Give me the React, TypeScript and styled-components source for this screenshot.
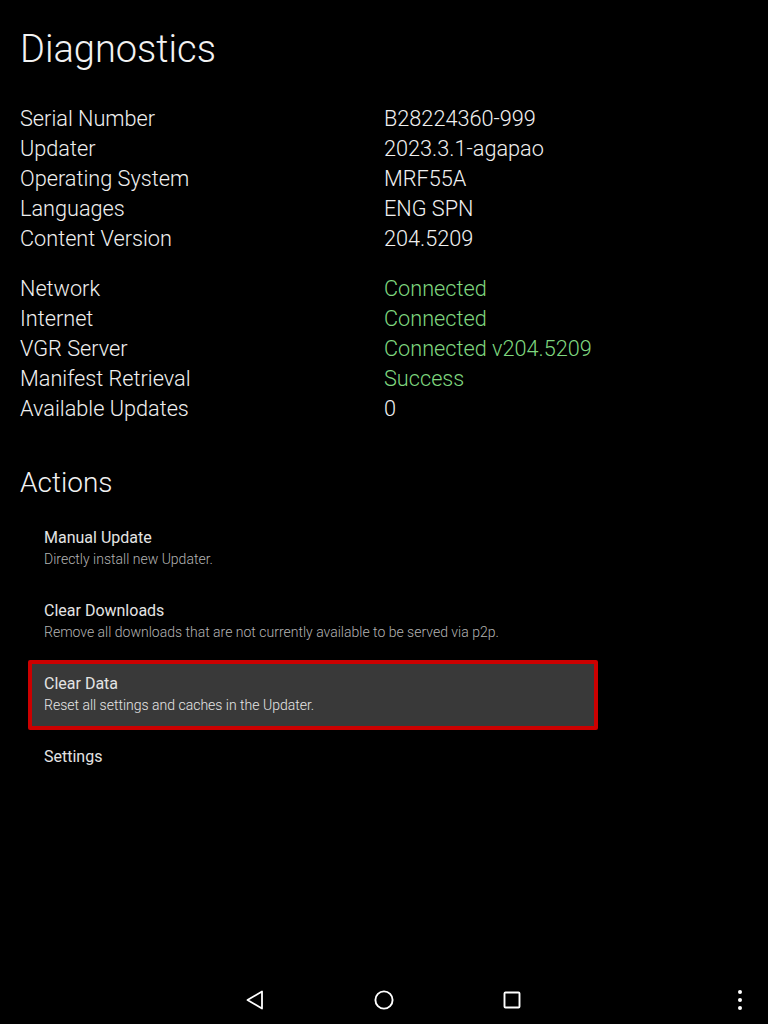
import React from "react";
import styled, { createGlobalStyle } from "styled-components";

const GlobalStyle = createGlobalStyle`
	html, body {
		margin: 0;
		padding: 0;
		background: #000;
	}
	body {
		font-family: Roboto, "Liberation Sans", sans-serif;
		color: #fff;
	}
`;

type Info = { label: string; value: string; ok?: boolean };

const deviceInfo: Info[] = [
	{ label: "Serial Number", value: "B28224360-999" },
	{ label: "Updater", value: "2023.3.1-agapao" },
	{ label: "Operating System", value: "MRF55A" },
	{ label: "Languages", value: "ENG SPN" },
	{ label: "Content Version", value: "204.5209" },
];

const statusInfo: Info[] = [
	{ label: "Network", value: "Connected", ok: true },
	{ label: "Internet", value: "Connected", ok: true },
	{ label: "VGR Server", value: "Connected v204.5209", ok: true },
	{ label: "Manifest Retrieval", value: "Success", ok: true },
	{ label: "Available Updates", value: "0" },
];

const actions = [
	{ title: "Manual Update", sub: "Directly install new Updater." },
	{
		title: "Clear Downloads",
		sub: "Remove all downloads that are not currently available to be served via p2p.",
	},
	{ title: "Clear Data", sub: "Reset all settings and caches in the Updater.", selected: true },
	{ title: "Settings" },
];

export default function App() {
	return (
		<Page>
			<GlobalStyle />
			<Content>
				<Title>Diagnostics</Title>
				<InfoGrid>
					{deviceInfo.map((row) => (
						<React.Fragment key={row.label}>
							<Label>{row.label}</Label>
							<Value $ok={row.ok}>{row.value}</Value>
						</React.Fragment>
					))}
				</InfoGrid>
				<InfoGrid $spaced>
					{statusInfo.map((row) => (
						<React.Fragment key={row.label}>
							<Label>{row.label}</Label>
							<Value $ok={row.ok}>{row.value}</Value>
						</React.Fragment>
					))}
				</InfoGrid>
				<SectionTitle>Actions</SectionTitle>
				<ActionList>
					{actions.map((a) => (
						<ActionItem key={a.title} $selected={a.selected}>
							<ActionTitle>{a.title}</ActionTitle>
							{a.sub && <ActionSub $selected={a.selected}>{a.sub}</ActionSub>}
						</ActionItem>
					))}
				</ActionList>
			</Content>
			<NavBar>
				<span />
				<NavButtons>
					<NavButton>
						<svg width="20" height="20" viewBox="0 0 20 20">
							<path
								d="M16 1.5 L16 18.5 L1.5 10 Z"
								fill="none"
								stroke="#fff"
								strokeWidth="1.8"
								strokeLinejoin="round"
							/>
						</svg>
					</NavButton>
					<NavButton>
						<svg width="22" height="22" viewBox="0 0 22 22">
							<circle cx="11" cy="11" r="8.6" fill="none" stroke="#fff" strokeWidth="1.9" />
						</svg>
					</NavButton>
					<NavButton>
						<svg width="20" height="20" viewBox="0 0 20 20">
							<rect
								x="2.5"
								y="2.5"
								width="15"
								height="15"
								rx="1"
								fill="none"
								stroke="#fff"
								strokeWidth="1.9"
							/>
						</svg>
					</NavButton>
				</NavButtons>
				<MenuCell>
					<svg width="6" height="22" viewBox="0 0 6 22">
						<circle cx="3" cy="3" r="2" fill="#fff" />
						<circle cx="3" cy="11" r="2" fill="#fff" />
						<circle cx="3" cy="19" r="2" fill="#fff" />
					</svg>
				</MenuCell>
			</NavBar>
		</Page>
	);
}

const Page = styled.div`
	display: flex;
	flex-direction: column;
	height: 100vh;
	background: #000;
	overflow: hidden;
`;

const Content = styled.main`
	flex: 1;
	padding: 25px 20px 0;
`;

const Title = styled.h1`
	margin: 0;
	font-size: 38px;
	font-weight: 300;
	line-height: 48px;
	color: #f2f2f2;
`;

const InfoGrid = styled.div<{ $spaced?: boolean }>`
	display: grid;
	grid-template-columns: 364px auto;
	margin-top: ${(p) => (p.$spaced ? "20px" : "31px")};
	font-size: 21.7px;
	font-weight: 300;
	line-height: 30px;
`;

const Label = styled.div`
	color: #f0f0f0;
`;

const Value = styled.div<{ $ok?: boolean }>`
	color: ${(p) => (p.$ok ? "#7fd77f" : "#f0f0f0")};
`;

const SectionTitle = styled.h2`
	margin: 39px 0 0;
	font-size: 28px;
	font-weight: 300;
	line-height: 40px;
	color: #f2f2f2;
`;

const ActionList = styled.div`
	display: flex;
	flex-direction: column;
	gap: 3px;
	width: 570px;
	margin: 11px 0 0 8px;
`;

const ActionItem = styled.div<{ $selected?: boolean }>`
	box-sizing: border-box;
	height: 70px;
	padding: 10px 12px 0;
	border: 4px solid ${(p) => (p.$selected ? "#cc0000" : "transparent")};
	border-radius: 2px;
	background: ${(p) => (p.$selected ? "#393939" : "transparent")};
`;

const ActionTitle = styled.div`
	font-size: 16px;
	line-height: 20px;
	color: #e4e4e4;
`;

const ActionSub = styled.div<{ $selected?: boolean }>`
	font-size: 14px;
	font-weight: 300;
	line-height: 22px;
	color: ${(p) => (p.$selected ? "#e6e6e6" : "#b4b4b4")};
`;

const NavBar = styled.nav`
	display: grid;
	grid-template-columns: 1fr auto 1fr;
	align-items: center;
	height: 48px;
	flex-shrink: 0;
`;

const NavButtons = styled.div`
	display: flex;
	gap: 80px;
`;

const NavButton = styled.div`
	width: 48px;
	height: 48px;
	display: flex;
	align-items: center;
	justify-content: center;
`;

const MenuCell = styled.div`
	display: flex;
	justify-content: flex-end;
	align-items: center;
	padding-right: 25px;
`;
